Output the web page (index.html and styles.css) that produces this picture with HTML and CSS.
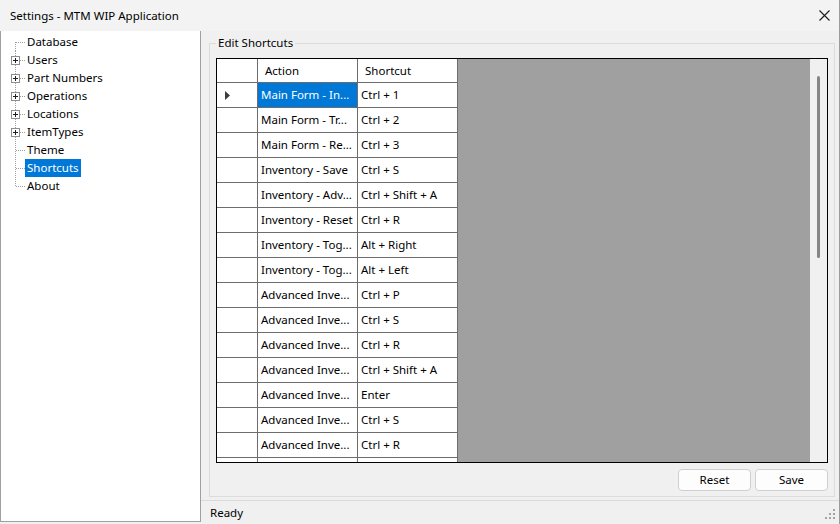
FILE: index.html
```html
<!DOCTYPE html>
<html lang="en">
<head>
<meta charset="utf-8">
<title>Settings - MTM WIP Application</title>
<link rel="stylesheet" href="styles.css">
</head>
<body>
<div class="window">
  <header class="titlebar">
    <span class="title">Settings - MTM WIP Application</span>
    <svg class="close" width="11" height="11" viewBox="0 0 11 11"><path d="M0.5 0.5L10.5 10.5M10.5 0.5L0.5 10.5" stroke="#1a1a1a" stroke-width="1.1" fill="none"/></svg>
  </header>
  <div class="body">
    <nav class="tree">
      <ul>
        <li class="node first"><span class="gutter"></span><span class="label">Database</span></li>
        <li class="node"><span class="gutter"><svg class="plus" width="9" height="9" viewBox="0 0 9 9"><rect x="0.5" y="0.5" width="8" height="8" fill="#fff" stroke="#8e8e8e"/><path d="M2 4.5h5M4.5 2v5" stroke="#1f1f1f"/></svg></span><span class="label">Users</span></li>
        <li class="node"><span class="gutter"><svg class="plus" width="9" height="9" viewBox="0 0 9 9"><rect x="0.5" y="0.5" width="8" height="8" fill="#fff" stroke="#8e8e8e"/><path d="M2 4.5h5M4.5 2v5" stroke="#1f1f1f"/></svg></span><span class="label">Part Numbers</span></li>
        <li class="node"><span class="gutter"><svg class="plus" width="9" height="9" viewBox="0 0 9 9"><rect x="0.5" y="0.5" width="8" height="8" fill="#fff" stroke="#8e8e8e"/><path d="M2 4.5h5M4.5 2v5" stroke="#1f1f1f"/></svg></span><span class="label">Operations</span></li>
        <li class="node"><span class="gutter"><svg class="plus" width="9" height="9" viewBox="0 0 9 9"><rect x="0.5" y="0.5" width="8" height="8" fill="#fff" stroke="#8e8e8e"/><path d="M2 4.5h5M4.5 2v5" stroke="#1f1f1f"/></svg></span><span class="label">Locations</span></li>
        <li class="node"><span class="gutter"><svg class="plus" width="9" height="9" viewBox="0 0 9 9"><rect x="0.5" y="0.5" width="8" height="8" fill="#fff" stroke="#8e8e8e"/><path d="M2 4.5h5M4.5 2v5" stroke="#1f1f1f"/></svg></span><span class="label">ItemTypes</span></li>
        <li class="node"><span class="gutter"></span><span class="label">Theme</span></li>
        <li class="node"><span class="gutter"></span><span class="label selected">Shortcuts</span></li>
        <li class="node last"><span class="gutter"></span><span class="label">About</span></li>
      </ul>
    </nav>
    <main class="pane">
      <fieldset class="group">
        <legend>Edit Shortcuts</legend>
        <div class="grid">
          <div class="table">
            <div class="row head"><div class="cell rh"></div><div class="cell">Action</div><div class="cell">Shortcut</div></div>
            <div class="row"><div class="cell rh"><svg class="current" width="5" height="9" viewBox="0 0 5 9"><path d="M0 0L5 4.5L0 9Z" fill="#3c3c3c"/></svg></div><div class="cell sel">Main Form - In...</div><div class="cell">Ctrl + 1</div></div>
            <div class="row"><div class="cell rh"></div><div class="cell">Main Form - Tr...</div><div class="cell">Ctrl + 2</div></div>
            <div class="row"><div class="cell rh"></div><div class="cell">Main Form - Re...</div><div class="cell">Ctrl + 3</div></div>
            <div class="row"><div class="cell rh"></div><div class="cell">Inventory - Save</div><div class="cell">Ctrl + S</div></div>
            <div class="row"><div class="cell rh"></div><div class="cell">Inventory - Adv...</div><div class="cell">Ctrl + Shift + A</div></div>
            <div class="row"><div class="cell rh"></div><div class="cell">Inventory - Reset</div><div class="cell">Ctrl + R</div></div>
            <div class="row"><div class="cell rh"></div><div class="cell">Inventory - Tog...</div><div class="cell">Alt + Right</div></div>
            <div class="row"><div class="cell rh"></div><div class="cell">Inventory - Tog...</div><div class="cell">Alt + Left</div></div>
            <div class="row"><div class="cell rh"></div><div class="cell">Advanced Inve...</div><div class="cell">Ctrl + P</div></div>
            <div class="row"><div class="cell rh"></div><div class="cell">Advanced Inve...</div><div class="cell">Ctrl + S</div></div>
            <div class="row"><div class="cell rh"></div><div class="cell">Advanced Inve...</div><div class="cell">Ctrl + R</div></div>
            <div class="row"><div class="cell rh"></div><div class="cell">Advanced Inve...</div><div class="cell">Ctrl + Shift + A</div></div>
            <div class="row"><div class="cell rh"></div><div class="cell">Advanced Inve...</div><div class="cell">Enter</div></div>
            <div class="row"><div class="cell rh"></div><div class="cell">Advanced Inve...</div><div class="cell">Ctrl + S</div></div>
            <div class="row"><div class="cell rh"></div><div class="cell">Advanced Inve...</div><div class="cell">Ctrl + R</div></div>
            <div class="row"><div class="cell rh"></div><div class="cell"></div><div class="cell"></div></div>
          </div>
          <div class="vscroll"><div class="thumb"></div></div>
        </div>
        <div class="buttons">
          <button class="btn">Reset</button>
          <button class="btn">Save</button>
        </div>
      </fieldset>
      <footer class="status">
        <span class="status-text">Ready</span>
        <svg class="grip" width="10" height="10" viewBox="0 0 10 10"><g fill="#a3a3a3"><rect x="8" y="0" width="2" height="2"/><rect x="4" y="4" width="2" height="2"/><rect x="8" y="4" width="2" height="2"/><rect x="0" y="8" width="2" height="2"/><rect x="4" y="8" width="2" height="2"/><rect x="8" y="8" width="2" height="2"/></g></svg>
      </footer>
    </main>
  </div>
</div>
</body>
</html>
```
FILE: styles.css
```css
html, body {
  margin: 0;
  padding: 0;
}
body {
  background: #f0f0f0;
  font-family: "Noto Sans", "Open Sans", sans-serif;
  font-size: 11.5px;
  color: #000;
}
.window {
  width: 840px;
  height: 524px;
  box-sizing: border-box;
  border-right: 1px solid #9c9c9c;
  background: #f0f0f0;
  display: flex;
  flex-direction: column;
  overflow: hidden;
}
.titlebar {
  height: 31px;
  flex: none;
  background: #f3f3f3;
  display: flex;
  align-items: center;
  justify-content: space-between;
  padding: 0 9px 0 10px;
}
.title {
  line-height: 16px;
}
.close {
  display: block;
}
.body {
  flex: 1;
  display: flex;
  min-height: 0;
}
.tree {
  width: 201px;
  height: 491px;
  box-sizing: border-box;
  flex: none;
  background: #fff;
  border-left: 1px solid #a0a0a0;
  border-right: 1px solid #a0a0a0;
  border-bottom: 1px solid #a0a0a0;
}
.tree ul {
  list-style: none;
  margin: 0;
  padding: 2px 0 0 0;
}
.node {
  height: 18px;
  display: flex;
  align-items: stretch;
}
.gutter {
  width: 24px;
  flex: none;
  position: relative;
  background-image:
    repeating-linear-gradient(to bottom, #a0a0a0 0 1px, transparent 1px 2px),
    repeating-linear-gradient(to right, #a0a0a0 0 1px, transparent 1px 2px);
  background-repeat: no-repeat;
  background-position: 14px 0, 15px 9px;
  background-size: 1px 18px, 9px 1px;
}
.first .gutter {
  background-position: 14px 9px, 15px 9px;
  background-size: 1px 9px, 9px 1px;
}
.last .gutter {
  background-position: 14px 0, 15px 9px;
  background-size: 1px 10px, 9px 1px;
}
.plus {
  position: absolute;
  left: 10px;
  top: 5px;
  display: block;
}
.label {
  padding: 0 2px;
  line-height: 18px;
  white-space: nowrap;
}
.label.selected {
  background: #0078d7;
  color: #fff;
}
.pane {
  flex: 1;
  display: flex;
  flex-direction: column;
  padding: 4px 4px 0 8px;
  min-width: 0;
}
.group {
  margin: 0;
  padding: 7px 6px 5px 6px;
  border: 1px solid #dcdcdc;
  min-width: 0;
}
.group legend {
  padding: 0 2px;
  margin-left: 0;
  line-height: 16px;
}
.grid {
  height: 405px;
  box-sizing: border-box;
  border: 1px solid #000;
  display: flex;
}
.table {
  flex: 1;
  background: #a0a0a0;
  overflow: hidden;
}
.row {
  display: grid;
  grid-template-columns: 41px 100px 100px;
  height: 25px;
}
.row.head {
  height: 24px;
}
.cell {
  background: #fff;
  border-right: 1px solid #6d6d6d;
  border-bottom: 1px solid #6d6d6d;
  padding-left: 3px;
  line-height: 24px;
  white-space: nowrap;
  overflow: hidden;
}
.head .cell {
  line-height: 23px;
  padding-left: 7px;
}
.cell.rh {
  padding-left: 0;
  display: flex;
  align-items: center;
}
.current {
  display: block;
  margin-left: 8px;
}
.cell.sel {
  background: #0078d7;
  color: #fff;
}
.vscroll {
  width: 17px;
  flex: none;
  background: #f0f0f0;
  padding-top: 17px;
}
.thumb {
  width: 3px;
  height: 182px;
  margin-left: 7px;
  background: #858585;
  border-radius: 2px;
}
.buttons {
  display: flex;
  justify-content: flex-end;
  gap: 4px;
  margin-top: 6px;
}
.btn {
  width: 73px;
  height: 22px;
  box-sizing: border-box;
  border: 1px solid #cfcfcf;
  border-radius: 4px;
  background: #fdfdfd;
  font-family: inherit;
  font-size: 11.5px;
  line-height: 16px;
  color: #000;
  padding: 0;
}
.status {
  margin: 3px -4px 0 -8px;
  height: 24px;
  box-sizing: border-box;
  border-top: 1px solid #dadada;
  display: flex;
  justify-content: space-between;
  align-items: center;
  padding: 0 4px 0 9px;
}
.status-text {
  line-height: 16px;
}
.grip {
  display: block;
  align-self: flex-end;
  margin-bottom: 5px;
}
```
